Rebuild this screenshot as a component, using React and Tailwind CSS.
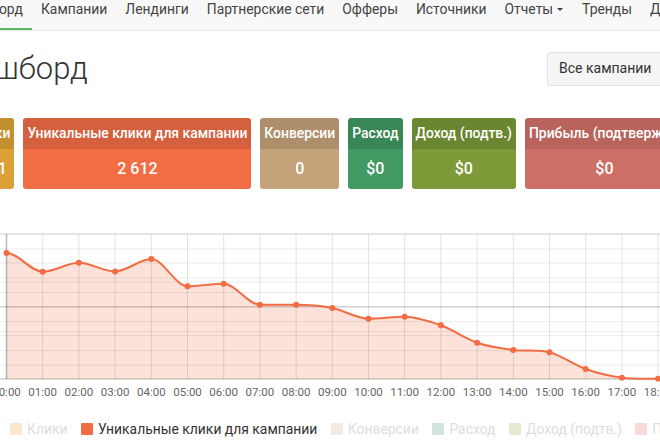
const navItems = ['Кампании', 'Лендинги', 'Партнерские сети', 'Офферы', 'Источники'];

const cards = [
  { title: 'Клики', value: '3 021', head: 'bg-[#c4902f]', body: 'bg-[#dca036] pr-[7px]' },
  { title: 'Уникальные клики для кампании', value: '2 612', head: 'bg-[#d4603d]', body: 'bg-[#f26d43]' },
  { title: 'Конверсии', value: '0', head: 'bg-[#ad8f6c]', body: 'bg-[#c4a27a]' },
  { title: 'Расход', value: '$0', head: 'bg-[#398656]', body: 'bg-[#419a61]' },
  { title: 'Доход (подтв.)', value: '$0', head: 'bg-[#6b8631]', body: 'bg-[#7c9a38]' },
  { title: 'Прибыль (подтвержд.)', value: '$0', head: 'bg-[#b8635b]', body: 'bg-[#cd6f66]' },
];

const legend = [
  { label: 'Клики', swatch: 'bg-[#f8e9cf]', on: false },
  { label: 'Уникальные клики для кампании', swatch: 'bg-[#f26d43]', on: true },
  { label: 'Конверсии', swatch: 'bg-[#f3ebe2]', on: false },
  { label: 'Расход', swatch: 'bg-[#cfe6dc]', on: false },
  { label: 'Доход (подтв.)', swatch: 'bg-[#e3e9d2]', on: false },
  { label: 'Прибыль', swatch: 'bg-[#f5dcd9]', on: false },
];

// chart coordinates are relative to the svg, which starts at y=225
const values = [28, 46.7, 37.7, 46.5, 34, 61.3, 58.7, 79.7, 79.7, 83, 93.7, 91.7, 100.3, 117.7, 125, 127.3, 144, 152.7, 153.7];
const hLines = [24, 38, 53, 57, 67.5, 96.7, 106.7, 110.7, 125.7, 140];
const xAt = (i) => 6.5 + i * 36.2;
const top = 9;
const bottom = 154;

const buildLine = () => {
  let d = `M${xAt(0)} ${values[0]}`;
  for (let i = 0; i < values.length - 1; i++) {
    const y0 = values[i];
    const y1 = values[i + 1];
    const prev = values[i - 1] ?? y0;
    const next = values[i + 2] ?? y1;
    // flatten the tangent on local peaks so the curve doesn't overshoot
    const t0 = (y1 - y0) * (y0 - prev) <= 0 ? 0 : (y1 - prev) / 2;
    const t1 = (next - y1) * (y1 - y0) <= 0 ? 0 : (next - y0) / 2;
    d += ` C${xAt(i) + 12} ${y0 + t0 / 3} ${xAt(i + 1) - 12} ${y1 - t1 / 3} ${xAt(i + 1)} ${y1}`;
  }
  return d;
};

function Chart() {
  const line = buildLine();
  const area = `${line} L${xAt(18)} ${bottom} L${xAt(0)} ${bottom} Z`;
  return (
    <svg width="660" height="180" className="mt-[36px] block">
      <path d={area} fill="#f26d43" fillOpacity="0.2" />
      {hLines.map((y) => (
        <line key={y} x1="0" x2="660" y1={y} y2={y} stroke="#000" strokeOpacity="0.08" />
      ))}
      <line x1="0" x2="660" y1="81.7" y2="81.7" stroke="#000" strokeOpacity="0.18" strokeWidth="1.5" />
      <line x1="0" x2="660" y1={top} y2={top} stroke="#000" strokeOpacity="0.2" />
      {values.map((_, i) => (
        <line key={i} x1={xAt(i)} x2={xAt(i)} y1={top} y2={bottom} stroke="#000" strokeOpacity={i === 0 ? 0.28 : 0.11} strokeWidth={i === 0 ? 1.5 : 1} />
      ))}
      <line x1="0" x2="660" y1={bottom} y2={bottom} stroke="#000" strokeOpacity="0.28" strokeWidth="1.2" />
      <path d={line} fill="none" stroke="#f26d43" strokeWidth="2" />
      {values.map((y, i) => (
        <circle key={i} cx={xAt(i)} cy={y} r="3" fill="#f26d43" />
      ))}
      {values.map((_, i) => (
        <text key={i} x={xAt(i)} y="171" textAnchor="middle" fontSize="11.5" fill="#666">
          {String(i).padStart(2, '0')}:00
        </text>
      ))}
    </svg>
  );
}

export default function App() {
  return (
    <div className="w-[660px] h-[440px] overflow-hidden bg-white font-['Roboto',sans-serif] text-[#333]">
      {/* top nav, cut off on the left */}
      <div className="h-[31px] bg-[#f8f8f8] border-b border-[#e7e7e7] flex text-[13.9px] leading-[18px] text-[#444] whitespace-nowrap">
        <div className="shrink-0 -ml-[47px] h-[30px] px-[9px] border-b-2 border-[#5cb85c]">Дашборд</div>
        {navItems.map((item) => (
          <div key={item} className="shrink-0 px-[9px]">{item}</div>
        ))}
        <div className="shrink-0 px-[9px] flex items-start">
          Отчеты
          <span className="ml-[4px] mr-[1px] mt-[8px] border-x-[3px] border-x-transparent border-t-[3px] border-t-[#444]" />
        </div>
        <div className="shrink-0 px-[9px]">Тренды</div>
        <div className="shrink-0 px-[9px]">Доход</div>
      </div>

      {/* title row */}
      <div className="flex items-center h-[87px] pb-[12px] whitespace-nowrap">
        <h1 className="shrink-0 -ml-[45px] text-[31px] font-light text-[#333] leading-none">Дашборд</h1>
        <button className="shrink-0 ml-auto -mr-[17px] w-[130px] h-[34px] pl-[11px] text-left text-[14px] bg-[#f5f5f5] border border-[#e3e3e3] rounded-[3px] text-[#333]">
          Все кампании
        </button>
      </div>

      {/* stat cards */}
      <div className="flex gap-[9px] -ml-[34px] w-[800px] whitespace-nowrap text-white">
        {cards.map((card) => (
          <div key={card.title} className="shrink-0 rounded-[3px] overflow-hidden text-center">
            <div className={`h-[31px] px-[4px] flex items-center justify-center text-[13.9px] font-medium ${card.head}`}>
              {card.title}
            </div>
            <div className={`h-[40px] flex items-center justify-center text-[16px] font-medium ${card.body}`}>
              {card.value}
            </div>
          </div>
        ))}
      </div>

      <Chart />

      {/* legend */}
      <div className="flex items-center ml-[10px] mt-[14px] w-[700px] text-[13.9px] whitespace-nowrap">
        {legend.map((l) => (
          <div key={l.label} className="shrink-0 flex items-center gap-[5px] mr-[13.5px]">
            <span className={`w-[12px] h-[12px] rounded-[1px] ${l.swatch}`} />
            <span className={l.on ? 'text-[#333]' : 'text-[#ddd]'}>{l.label}</span>
          </div>
        ))}
      </div>
    </div>
  );
}
